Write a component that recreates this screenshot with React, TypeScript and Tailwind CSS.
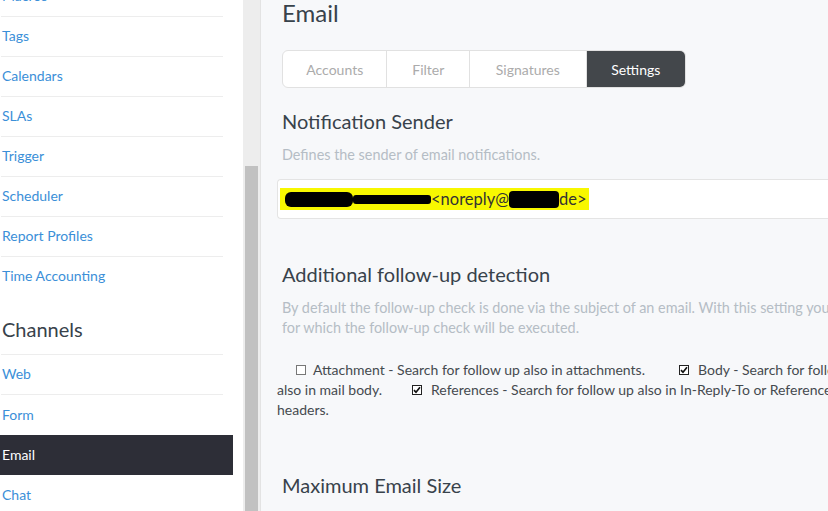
import React from 'react'

const topItems = ['Macros', 'Tags', 'Calendars', 'SLAs', 'Trigger', 'Scheduler', 'Report Profiles', 'Time Accounting']
const tabs = ['Accounts', 'Filter', 'Signatures', 'Settings']

const Box: React.FC<{ checked?: boolean }> = ({ checked }) => (
    <svg width="10" height="10" viewBox="0 0 10 10" className="inline-block shrink-0">
        <rect x="0.5" y="0.5" width="9" height="9" fill="white" stroke={checked ? '#222' : '#777'} strokeWidth="1" />
        {checked && <path d="M2 5.1 L4 7.3 L8 2.3" fill="none" stroke="#111" strokeWidth="1.7" />}
    </svg>
)

const Line = () => <div className="ml-px h-px w-[222px] bg-[#ededed]"></div>

const App: React.FC = () => {
    return (
        <div className="flex h-[511px] w-[828px] overflow-hidden font-['Lato',sans-serif] text-[14px]">
            {/* sidebar */}
            <aside className="w-[243px] shrink-0 bg-white overflow-hidden">
                <div className="-mt-[23px]">
                    {topItems.map((item, i) => (
                        <div key={item}>
                            <div className="h-[39px] w-[233px] flex items-center pb-[2px] pl-[2px] text-[#3b8fd8]">{item}</div>
                            {i < topItems.length - 1 && <Line />}
                        </div>
                    ))}
                    <div className="pt-[20px] pb-[12px] pl-[2px] text-[20px] leading-[26px] text-[#38424b]">Channels</div>
                    <Line />
                    <div className="h-[39px] w-[233px] flex items-center pb-[2px] pl-[2px] text-[#3b8fd8]">Web</div>
                    <Line />
                    <div className="h-[40px] w-[233px] flex items-center pb-[2px] pl-[2px] text-[#3b8fd8]">Form</div>
                    <div className="h-[40px] w-[233px] flex items-center pb-[2px] pl-[2px] bg-[#2d2e37] text-white">Email</div>
                    <div className="h-[40px] w-[233px] flex items-center pb-[2px] pl-[2px] text-[#3b8fd8]">Chat</div>
                </div>
            </aside>

            {/* scrollbar */}
            <div className="w-[18px] shrink-0 bg-[#ededed] border-r border-[#e3e3e3] flex flex-col">
                <div className="h-[166px]"></div>
                <div className="flex-1 ml-[2px] mr-[2px] bg-[#c1c1c1]"></div>
            </div>

            {/* main */}
            <main className="flex-1 bg-[#f7f8fa] overflow-hidden pl-[16px] text-[#38424b]">
                <h1 className="-mt-px pl-[5px] text-[24px] leading-[28px]">Email</h1>

                <div className="mt-[23px] ml-[5px] flex h-[38px] w-[404px] rounded-[6px] border border-[#e1e1e1] bg-white overflow-hidden">
                    {tabs.map((t, i) => (
                        <div
                            key={t}
                            className={
                                t === 'Settings'
                                    ? 'flex items-center justify-center w-[99px] bg-[#43474b] text-white'
                                    : 'flex items-center justify-center border-r border-[#e1e1e1] text-[#ababab] ' +
                                      (i === 0 ? 'w-[105px]' : i === 1 ? 'w-[83px]' : 'w-[117px]')
                            }
                        >
                            {t}
                        </div>
                    ))}
                </div>

                <h2 className="mt-[19px] pl-[5px] text-[20px] leading-[28px]">Notification Sender</h2>
                <p className="mt-[10px] pl-[5px] leading-[20px] text-[14.4px] text-[#b5bdc5]">Defines the sender of email notifications.</p>

                <div className="mt-[14px] h-[40px] w-[600px] rounded-[4px] border border-r-0 border-[#e4e4e4] bg-white flex items-center pl-[2px]">
                    <div className="flex items-center h-[22px] bg-[#f8f800] text-[#333] text-[16.5px] pr-[2px]">
                        <span className="ml-[5px] h-[15px] w-[68px] rounded-[6px] bg-black"></span>
                        <span className="h-[9px] w-[78px] rounded-[3px] bg-black"></span>
                        <span>&lt;noreply@</span>
                        <span className="h-[17px] w-[50px] rounded-[4px] bg-black"></span>
                        <span>de&gt;</span>
                    </div>
                </div>

                <h2 className="mt-[41px] pl-[5px] text-[20px] leading-[28px]">Additional follow-up detection</h2>
                <div className="mt-[10px] pl-[5px] leading-[20px] text-[14.4px] text-[#b5bdc5] whitespace-nowrap">
                    <div>By default the follow-up check is done via the subject of an email. With this setting you can add more fields</div>
                    <div>for which the follow-up check will be executed.</div>
                </div>

                <div className="mt-[22px] leading-[20px] text-[#454a4f] whitespace-nowrap">
                    <div className="flex items-center">
                        <span className="w-[19px] shrink-0"></span>
                        <Box />
                        <span className="ml-[7px] w-[366px] shrink-0">Attachment - Search for follow up also in attachments.</span>
                        <Box checked />
                        <span className="ml-[9px]">Body - Search for follow up</span>
                    </div>
                    <div className="flex items-center">
                        <span className="w-[112px] shrink-0">also in mail body.</span>
                        <span className="w-[23px] shrink-0"></span>
                        <Box checked />
                        <span className="ml-[9px]">References - Search for follow up also in In-Reply-To or References</span>
                    </div>
                    <div>headers.</div>
                </div>

                <h2 className="mt-[51px] pl-[5px] text-[20px] leading-[28px]">Maximum Email Size</h2>
            </main>
        </div>
    )
}

export default App
